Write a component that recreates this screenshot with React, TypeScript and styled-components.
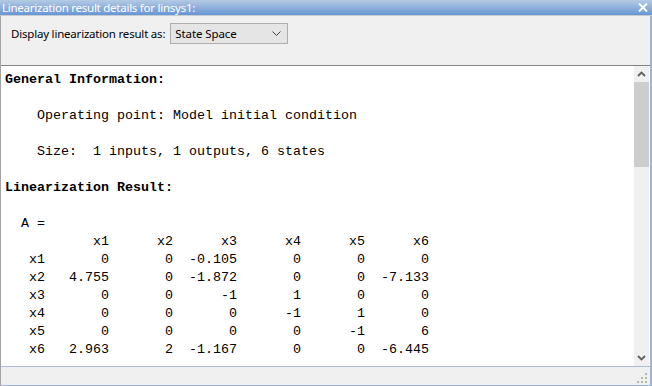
import React from "react";
import styled, { createGlobalStyle } from "styled-components";

const GlobalStyle = createGlobalStyle`
  html, body {
    margin: 0;
    padding: 0;
    background: #f0f0f0;
    overflow: hidden;
  }
`;

const Window = styled.div`
  width: 652px;
  height: 386px;
  display: flex;
  flex-direction: column;
  box-sizing: border-box;
  font-family: "Noto Sans", "Open Sans", sans-serif;
`;

const TitleBar = styled.div`
  height: 15px;
  flex: none;
  display: flex;
  align-items: center;
  justify-content: space-between;
  padding: 0 4px 0 2px;
  background: linear-gradient(to bottom, #b3cae4 0%, #8fb0db 50%, #6796d2 100%);
  border-bottom: 1px solid #c6ccd4;
  color: #ffffff;
  font-size: 11.5px;
  line-height: 15px;
  white-space: nowrap;
`;

const TitleText = styled.span`
  letter-spacing: -0.25px;
`;

const Body = styled.div`
  flex: 1;
  display: flex;
  flex-direction: column;
  border-left: 1px solid #a3a3a3;
  border-right: 2px solid #9cb3d2;
  border-bottom: 1px solid #9cb3d2;
  min-height: 0;
`;

const Toolbar = styled.div`
  height: 49px;
  flex: none;
  display: flex;
  align-items: flex-start;
  padding: 7px 0 0 10px;
  box-sizing: border-box;
  background: #f0f0f0;
`;

const Label = styled.span`
  font-size: 11.5px;
  line-height: 21px;
  color: #000;
  margin-right: 5px;
  letter-spacing: -0.2px;
`;

const Combo = styled.div`
  width: 118px;
  height: 21px;
  box-sizing: border-box;
  display: flex;
  align-items: center;
  justify-content: space-between;
  padding: 0 6px 0 4px;
  background: #e5e5e5;
  border: 1px solid #adadad;
  font-size: 11.5px;
  letter-spacing: -0.1px;
  color: #000;
`;

const ContentFrame = styled.div`
  flex: 1;
  display: flex;
  border-top: 1px solid #828282;
  background: #ffffff;
  min-height: 0;
`;

const TextArea = styled.div`
  flex: 1;
  padding: 5px 0 0 4px;
  overflow: hidden;
  font-family: "Liberation Mono", "Courier New", monospace;
  font-size: 13.33px;
  line-height: 18px;
  color: #000;
`;

const Line = styled.div<{ $bold?: boolean; $indent?: number }>`
  height: 18px;
  white-space: pre;
  font-weight: ${({ $bold }) => ($bold ? "bold" : "normal")};
  padding-left: ${({ $indent }) => ($indent || 0) * 8}px;
`;

const Matrix = styled.div`
  display: grid;
  grid-template-columns: 40px repeat(6, 64px);
  grid-auto-rows: 18px;
`;

const Cell = styled.div`
  text-align: right;
  white-space: pre;
`;

const Scrollbar = styled.div`
  width: 15px;
  flex: none;
  display: flex;
  flex-direction: column;
  background: #f0f0f0;
  margin-right: 1px;
`;

const ArrowButton = styled.div`
  height: 16px;
  flex: none;
  display: flex;
  align-items: center;
  justify-content: center;
`;

const Thumb = styled.div`
  height: 85px;
  flex: none;
  background: #cdcdcd;
`;

const Track = styled.div`
  flex: 1;
`;

const StatusBar = styled.div`
  height: 17px;
  flex: none;
  display: flex;
  justify-content: flex-end;
  align-items: flex-end;
  padding: 0 2px 1px 0;
  background: #f0f0f0;
  border-top: 1px solid #a9bbd1;
`;

const Chevron = ({ dir }: { dir: "up" | "down" }) => (
  <svg width="9" height="6" viewBox="0 0 9 6">
    <path
      d={dir === "up" ? "M1 5 L4.5 1.5 L8 5" : "M1 1 L4.5 4.5 L8 1"}
      fill="none"
      stroke="#606060"
      strokeWidth="1.8"
    />
  </svg>
);

const header = ["x1", "x2", "x3", "x4", "x5", "x6"];
const rows: [string, string[]][] = [
  ["x1", ["0", "0", "-0.105", "0", "0", "0"]],
  ["x2", ["4.755", "0", "-1.872", "0", "0", "-7.133"]],
  ["x3", ["0", "0", "-1", "1", "0", "0"]],
  ["x4", ["0", "0", "0", "-1", "1", "0"]],
  ["x5", ["0", "0", "0", "0", "-1", "6"]],
  ["x6", ["2.963", "2", "-1.167", "0", "0", "-6.445"]],
];

export default function App() {
  return (
    <>
      <GlobalStyle />
      <Window>
        <TitleBar>
          <TitleText>Linearization result details for linsys1:</TitleText>
          <svg width="10" height="9" viewBox="0 0 10 9">
            <path d="M1 0.5 L9 8.5 M9 0.5 L1 8.5" stroke="#ffffff" strokeWidth="2" />
          </svg>
        </TitleBar>
        <Body>
          <Toolbar>
            <Label>Display linearization result as:</Label>
            <Combo>
              <span>State Space</span>
              <svg width="9" height="5" viewBox="0 0 9 5">
                <path d="M0.5 0.5 L4.5 4.5 L8.5 0.5" fill="none" stroke="#444" strokeWidth="1" />
              </svg>
            </Combo>
          </Toolbar>
          <ContentFrame>
            <TextArea>
              <Line $bold>General Information:</Line>
              <Line />
              <Line $indent={4}>Operating point: Model initial condition</Line>
              <Line />
              <Line $indent={4}>Size:  1 inputs, 1 outputs, 6 states</Line>
              <Line />
              <Line $bold>Linearization Result:</Line>
              <Line />
              <Line $indent={2}>A = </Line>
              <Matrix>
                <Cell />
                {header.map((h) => (
                  <Cell key={h}>{h}</Cell>
                ))}
                {rows.map(([name, vals]) => (
                  <React.Fragment key={name}>
                    <Cell>{name}</Cell>
                    {vals.map((v, i) => (
                      <Cell key={i}>{v}</Cell>
                    ))}
                  </React.Fragment>
                ))}
              </Matrix>
            </TextArea>
            <Scrollbar>
              <ArrowButton>
                <Chevron dir="up" />
              </ArrowButton>
              <Thumb />
              <Track />
              <ArrowButton>
                <Chevron dir="down" />
              </ArrowButton>
            </Scrollbar>
          </ContentFrame>
          <StatusBar>
            <svg width="12" height="12" viewBox="0 0 12 12">
              <g fill="#b9b7ab">
                <rect x="9" y="1" width="2" height="2" />
                <rect x="5" y="5" width="2" height="2" />
                <rect x="9" y="5" width="2" height="2" />
                <rect x="1" y="9" width="2" height="2" />
                <rect x="5" y="9" width="2" height="2" />
                <rect x="9" y="9" width="2" height="2" />
              </g>
            </svg>
          </StatusBar>
        </Body>
      </Window>
    </>
  );
}
